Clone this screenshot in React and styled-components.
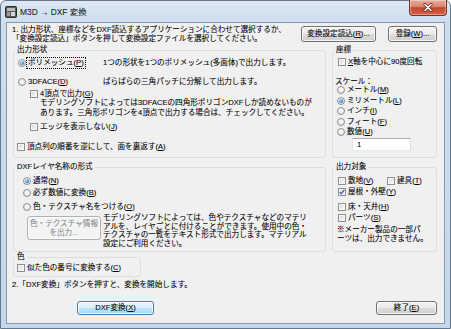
import React from 'react'
import styled, { createGlobalStyle } from 'styled-components'

const GlobalStyle = createGlobalStyle`
    html, body {
        margin: 0;
        padding: 0;
        background: #ffffff;
    }
    body {
        font-family: "Liberation Sans", "Noto Sans CJK JP", sans-serif;
        font-size: 7.6px;
        line-height: 10px;
        color: #000;
        -webkit-text-stroke: 0.08px currentColor;
    }
`

const Window = styled.div`
    width: 451px;
    height: 329px;
    box-sizing: border-box;
    display: flex;
    flex-direction: column;
    padding: 0 5px 4px 5px;
    border: 1px solid #66788d;
    border-radius: 6px 6px 0 0;
    background: linear-gradient(180deg, #dde8f4 0px, #cfdded 21px, #c6d7ea 100%);
`

const TitleBar = styled.div`
    height: 21px;
    display: flex;
    align-items: flex-start;
    flex: none;
`

const AppIcon = styled.svg`
    width: 12px;
    height: 12px;
    margin: 5px 3px 0 -1px;
    flex: none;
`

const Title = styled.span`
    margin-top: 6px;
    font-size: 8.4px;
    line-height: 10px;
    color: #1e1e1e;
`

const CloseButton = styled.div`
    width: 38px;
    height: 16px;
    margin: -1px -2px 0 auto;
    box-sizing: border-box;
    border: 1px solid #7a3427;
    border-top: none;
    border-radius: 0 0 4px 4px;
    background: linear-gradient(180deg, #e9a999 0%, #d98a77 42%, #c5472e 52%, #d2634a 100%);
    box-shadow: inset 0 0 0 1px rgba(255, 255, 255, 0.35);
    display: flex;
    align-items: center;
    justify-content: center;
`

const Client = styled.div`
    flex: 1;
    display: flex;
    flex-direction: column;
    background: #f0f0f0;
    border: 1px solid #8499b3;
    padding: 1px 7px 0 6px;
`

const Header = styled.div`
    display: flex;
    align-items: flex-start;
`

const Intro = styled.div`
    flex: 1;
    margin-left: -1px;
    padding-top: 0.5px;
    line-height: 9px;
    white-space: nowrap;
`

const HeaderButtons = styled.div`
    display: flex;
    gap: 12px;
    margin-top: 2px;
`

const Button = styled.button`
    font: inherit;
    line-height: ${p => p.$lh || 10}px;
    width: ${p => p.$w}px;
    height: ${p => p.$h || 16}px;
    margin-left: ${p => p.$ml || 0}px;
    padding: 0;
    flex: none;
    border-radius: 3px;
    border: 1px solid ${p => p.$default ? '#3c7fb1' : p.disabled ? '#adb2b5' : '#707070'};
    background: ${p => p.$default
        ? 'linear-gradient(180deg, #eaf6fd 0%, #d9f0fc 50%, #bee6fd 50%, #a7d9f5 100%)'
        : p.disabled
            ? '#f4f4f4'
            : 'linear-gradient(180deg, #f2f2f2 0%, #ebebeb 50%, #dddddd 50%, #cfcfcf 100%)'};
    box-shadow: inset 0 0 0 1px rgba(255, 255, 255, 0.75);
    color: ${p => p.disabled ? '#8a8a8a' : '#000'};
    white-space: nowrap;
`

const Row = styled.div`
    display: grid;
    grid-template-columns: 313px 105px;
    column-gap: 6px;
    margin-top: ${p => p.$mt || 0}px;
    align-items: start;
`

const Group = styled.fieldset`
    margin: 0;
    padding: 0;
    min-width: 0;
    box-sizing: border-box;
    width: ${p => p.$w ? `${p.$w}px` : 'auto'};
    height: ${p => p.$h}px;
    border: 1px solid #d5dfe5;
    border-radius: 3px;
`

const Legend = styled.legend`
    padding: 0 2px;
    margin-left: 1px;
    line-height: 10px;
`

const GroupBody = styled.div`
    display: flex;
    flex-direction: column;
    padding-left: ${p => p.$pl}px;
`

const ShapeRow = styled.div`
    display: grid;
    grid-template-columns: 85px 1fr;
    align-items: center;
    height: 10px;
    margin-top: ${p => p.$mt || 0}px;
    white-space: nowrap;
`

const Option = styled.label`
    display: flex;
    align-items: center;
    gap: 2px;
    height: ${p => p.$h || 10}px;
    width: ${p => p.$w ? `${p.$w}px` : 'auto'};
    margin-top: ${p => p.$mt || 0}px;
    margin-left: ${p => p.$indent || 0}px;
    white-space: nowrap;
    flex: none;
`

const OptionText = styled.span`
    outline: ${p => p.$focus ? '1px dotted #000' : 'none'};
    outline-offset: 0;
    padding: 0 1px;
    margin-left: -1px;
`

const RadioMark = styled.span`
    width: 8px;
    height: 8px;
    box-sizing: border-box;
    flex: none;
    border-radius: 50%;
    border: 1px solid #8f9091;
    background: radial-gradient(circle at 50% 35%, #ffffff 0%, #f0f0f0 45%, #d4d4d4 100%);
    display: flex;
    align-items: center;
    justify-content: center;

    &::after {
        content: '';
        width: 4px;
        height: 4px;
        border-radius: 50%;
        background: ${p => p.$on
            ? 'radial-gradient(circle at 35% 35%, #b5e4ff 0%, #3a8ee0 55%, #184f92 100%)'
            : 'transparent'};
    }
`

const CheckMark = styled.span`
    width: 8px;
    height: 8px;
    box-sizing: border-box;
    flex: none;
    border: 1px solid #8f9091;
    background: linear-gradient(135deg, #d2d2d2 0%, #f4f4f4 70%, #ffffff 100%);
    box-shadow: inset 0 0 0 1px #f6f6f6;
    display: flex;
    align-items: center;
    justify-content: center;
`

const Text = styled.div`
    height: ${p => p.$h || 10}px;
    margin-top: ${p => p.$mt || 0}px;
    margin-left: ${p => p.$indent || 0}px;
    white-space: nowrap;
`

const Paragraph = styled.div`
    line-height: ${p => p.$lh}px;
    margin-top: ${p => p.$mt || 0}px;
    margin-left: ${p => p.$indent || 0}px;
    white-space: nowrap;
`

const NumberInput = styled.input`
    font: inherit;
    line-height: 11px;
    width: 59px;
    height: 13px;
    box-sizing: border-box;
    margin: 0.5px 0 0 14px;
    padding: 0 4px;
    border: 1px solid;
    border-color: #abadb3 #dbdfe6 #e3e9ef #e2e3ea;
    background: #ffffff;
    color: #000;
`

const TextureRow = styled.div`
    display: flex;
    align-items: flex-start;
    gap: 2px;
    margin-top: 4px;
`

const InlineRow = styled.div`
    display: flex;
    margin-top: ${p => p.$mt || 0}px;
`

const Footer = styled.div`
    margin: 3px 0 0 -1px;
    height: 10px;
    white-space: nowrap;
`

const FooterButtons = styled.div`
    display: flex;
    margin-top: 11px;
`

function Radio({ on, focus, children, ...rest }) {
    return (
        <Option {...rest}>
            <RadioMark $on={on} />
            <OptionText $focus={focus}>{children}</OptionText>
        </Option>
    )
}

function Check({ on, children, ...rest }) {
    return (
        <Option {...rest}>
            <CheckMark>
                {on && (
                    <svg width="6" height="6" viewBox="0 0 6 6">
                        <path d="M0.6 3.1 L2.3 4.8 L5.4 0.9" fill="none" stroke="#3d5a9c" strokeWidth="1.3" />
                    </svg>
                )}
            </CheckMark>
            <OptionText>{children}</OptionText>
        </Option>
    )
}

export default function App() {
    return (
        <>
            <GlobalStyle />
            <Window>
                <TitleBar>
                    <AppIcon viewBox="0 0 12 12">
                        <rect x="0.5" y="0.5" width="11" height="11" rx="1" fill="#5a5a5a" stroke="#2b2b2b" />
                        <rect x="2" y="2" width="8" height="3" fill="#bdbdbd" />
                        <rect x="2" y="6" width="3" height="4" fill="#9a9a9a" />
                        <rect x="6" y="6" width="4" height="4" fill="#d8d8d8" />
                    </AppIcon>
                    <Title>M3D → DXF 変換</Title>
                    <CloseButton>
                        <svg width="10" height="9" viewBox="0 0 10 9">
                            <path d="M2 1.5 L8 7.5 M8 1.5 L2 7.5" stroke="#5a1e14" strokeWidth="3" strokeLinecap="round" />
                            <path d="M2 1.5 L8 7.5 M8 1.5 L2 7.5" stroke="#ffffff" strokeWidth="1.6" strokeLinecap="round" />
                        </svg>
                    </CloseButton>
                </TitleBar>
                <Client>
                    <Header>
                        <Intro>
                            1. 出力形状、座標などをDXF読込するアプリケーションに合わせて選択するか、<br />
                            「変換設定読込」ボタンを押して変換設定ファイルを選択してください。
                        </Intro>
                        <HeaderButtons>
                            <Button $w={75}>変換設定読込(<u>R</u>)...</Button>
                            <Button $w={49}>登録(<u>W</u>)...</Button>
                        </HeaderButtons>
                    </Header>

                    <Row $mt={2.5}>
                        <Group $h={113}>
                            <Legend>出力形状</Legend>
                            <GroupBody $pl={4}>
                                <ShapeRow $mt={3}>
                                    <Radio on focus>ポリメッシュ(<u>P</u>)</Radio>
                                    <span>1つの形状を1つのポリメッシュ(多面体)で出力します。</span>
                                </ShapeRow>
                                <ShapeRow $mt={9}>
                                    <Radio>3DFACE(<u>D</u>)</Radio>
                                    <span>ばらばらの三角パッチに分解して出力します。</span>
                                </ShapeRow>
                                <Check $mt={2} $indent={12}>4頂点で出力(<u>G</u>)</Check>
                                <Paragraph $lh={10} $mt={-1} $indent={22}>
                                    モデリングソフトによっては3DFACEの四角形ポリゴンDXFしか読めないものが<br />
                                    あります。三角形ポリゴンを4頂点で出力する場合は、チェックしてください。
                                </Paragraph>
                                <Check $mt={4} $indent={12}>エッジを表示しない(<u>J</u>)</Check>
                                <Check $mt={10} $indent={-1}>頂点列の順番を逆にして、面を裏返す(<u>A</u>)</Check>
                            </GroupBody>
                        </Group>
                        <Group $h={113}>
                            <Legend>座標</Legend>
                            <GroupBody $pl={5}>
                                <Check $mt={2}><u>X</u>軸を中心に90度回転</Check>
                                <Text $mt={10} $indent={-3}>スケール：</Text>
                                <Radio $mt={-2} $h={10.5} $indent={-1}>メートル(<u>M</u>)</Radio>
                                <Radio on $h={10.5} $indent={-1}>ミリメートル(<u>L</u>)</Radio>
                                <Radio $h={10.5} $indent={-1}>インチ(<u>I</u>)</Radio>
                                <Radio $h={10.5} $indent={-1}>フィート(<u>F</u>)</Radio>
                                <Radio $h={10.5} $indent={-1}>数値(<u>U</u>)</Radio>
                                <NumberInput defaultValue="1" />
                            </GroupBody>
                        </Group>
                    </Row>

                    <Row $mt={4}>
                        <Group $h={90}>
                            <Legend>DXFレイヤ名称の形式</Legend>
                            <GroupBody $pl={4}>
                                <Radio on $mt={4} $indent={5}>通常(<u>N</u>)</Radio>
                                <Radio $mt={2} $indent={5}>必ず数値に変換(<u>B</u>)</Radio>
                                <Radio $mt={4} $indent={5}>色・テクスチャ名をつける(<u>O</u>)</Radio>
                                <TextureRow>
                                    <Button disabled $w={74} $h={24} $lh={9} $ml={9}>
                                        色・テクスチャ情報<br />を出力...
                                    </Button>
                                    <Paragraph $lh={8.5} $mt={-2}>
                                        モデリングソフトによっては、色やテクスチャなどのマテリ<br />
                                        アルを、レイヤごとに付けることができます。使用中の色・<br />
                                        テクスチャの一覧をテキスト形式で出力します。マテリアル<br />
                                        設定にご利用ください。
                                    </Paragraph>
                                </TextureRow>
                            </GroupBody>
                        </Group>
                        <Group $h={90}>
                            <Legend>出力対象</Legend>
                            <GroupBody $pl={5}>
                                <InlineRow $mt={4}>
                                    <Check $w={49}>敷地(<u>V</u>)</Check>
                                    <Check>建具(<u>T</u>)</Check>
                                </InlineRow>
                                <Check on $mt={1}>屋根・外壁(<u>Y</u>)</Check>
                                <Check $mt={5}>床・天井(<u>H</u>)</Check>
                                <Check $mt={1}>パーツ(<u>S</u>)</Check>
                                <Paragraph $lh={9} $mt={1.5} $indent={-1}>
                                    ※メーカー製品の一部パ<br />
                                    ーツは、出力できません。
                                </Paragraph>
                            </GroupBody>
                        </Group>
                    </Row>

                    <Row>
                        <Group $h={25} $w={128}>
                            <Legend>色</Legend>
                            <GroupBody $pl={3}>
                                <Check $mt={1}>似た色の番号に変換する(<u>C</u>)</Check>
                            </GroupBody>
                        </Group>
                    </Row>

                    <Footer>2.「DXF変換」ボタンを押すと、変換を開始します。</Footer>

                    <FooterButtons>
                        <Button $default $w={77} $h={14} $ml={64}>DXF変換(<u>X</u>)</Button>
                        <Button $w={61} $h={14} $ml={222}>終了(<u>E</u>)</Button>
                    </FooterButtons>
                </Client>
            </Window>
        </>
    )
}
